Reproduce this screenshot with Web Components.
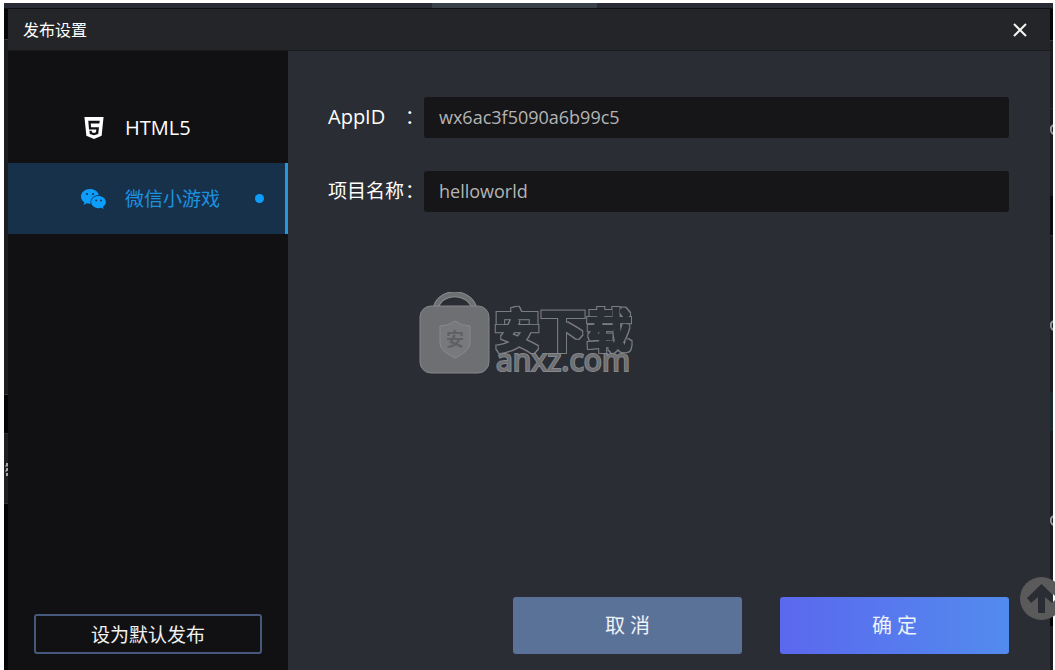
<!DOCTYPE html>
<html lang="zh-CN">
<head>
<meta charset="utf-8">
<title>发布设置</title>
<style>
  html, body { margin: 0; background: #fff; }
  body { font-family: "Open Sans", "Noto Sans CJK SC", sans-serif; color: #fff; }
</style>
</head>
<body>
<app-backdrop>
  <publish-dialog heading="发布设置">
    <platform-item slot="nav" label="HTML5">
      <svg viewBox="0 0 20 23" width="20" height="22"><path fill="#fff" fill-rule="evenodd" d="M0 0h20l-2 19.5L10 23l-8-3.500zM4 4l.8 9h7.600l-.3 3-2.100.7-2.200-.7-.2-1.500H5.200l.4 3.400L10 19.200l4.400-1.300.8-7.300H6.900l-.3-3.800h9L16 4z"/></svg>
    </platform-item>
    <platform-item slot="nav" label="微信小游戏" active>
      <svg viewBox="0 0 25 20" width="25" height="20">
        <path fill="#0d9dfb" d="M9 0C4 0 0 3.300 0 7.500c0 2.400 1.300 4.500 3.400 5.800L2.500 16l3.300-1.700c1 .3 2.100.4 3.200.4h.7c-.9-4.500 3-8.700 8.200-8.700C17 2.600 13.400 0 9 0z"/>
        <path fill="#0d9dfb" d="M17.500 7c-4.100 0-7.300 2.700-7.300 6.100s3.200 6.100 7.300 6.100c.9 0 1.700-.1 2.500-.4l2.600 1.200-.7-2.200c1.900-1.100 3-2.800 3-4.700C24.900 9.700 21.600 7 17.500 7z"/>
        <g fill="#17314a"><circle cx="6" cy="5" r="1"/><circle cx="12" cy="5" r="1"/><circle cx="15.200" cy="11.400" r=".9"/><circle cx="20" cy="11.400" r=".9"/></g>
      </svg>
    </platform-item>
    <outline-button slot="nav-footer">设为默认发布</outline-button>
    <form-field label="AppID" value="wx6ac3f5090a6b99c5" lang="en"></form-field>
    <form-field label="项目名称" value="helloworld"></form-field>
    <action-button slot="actions">取 消</action-button>
    <action-button slot="actions" primary>确 定</action-button>
  </publish-dialog>
  <site-watermark slot="overlay"></site-watermark>
  <back-to-top slot="overlay"></back-to-top>
</app-backdrop>

<script>
const define = (name, html, setup) => {
  const template = document.createElement('template');
  template.innerHTML = html;
  customElements.define(name, class extends HTMLElement {
    constructor() {
      super();
      this.attachShadow({ mode: 'open' }).append(template.content.cloneNode(true));
    }
    connectedCallback() { if (setup) setup(this, this.shadowRoot); }
  });
};

define('app-backdrop', `
  <style>
    :host { display: flex; box-sizing: border-box; position: relative; overflow: hidden;
      min-height: 100vh; padding: 3px 2px 0 4px; }
    .workspace { flex: 1; display: grid; grid-template: 6px 1fr / 4px 1fr 3px; background: #1b1d20; }
    .top { grid-column: 1 / -1; display: flex; justify-content: center; background: #282b33; border-bottom: 1px solid #101113; }
    .tab { width: 165px; background: #3a4048; margin-right: 28px; }
    .left { background: linear-gradient(#050708 0 30px, #34373a 30px 31px, #1b1d20 31px 385px, #34373a 385px 386px, #030405 386px 424px, #303236 424px 425px, #1d1f22 425px 494px, #303236 494px 495px, #030405 495px); }
    .right { background: linear-gradient(#050708 0 31px, #34373a 31px 32px, #1b1d20 32px 99px, #2c2f33 99px 100px, #1b1d20 100px 187px, #0a0c0e 187px 226px, #2c2f33 226px 227px, #1b1d20 227px 383px, #1b2b2f 383px 422px, #1b1d20 422px 585px, #030405 585px 617px, #1b1d20 617px); }
    .left svg, .right svg { display: block; }
  </style>
  <div class="workspace">
    <div class="top"><div class="tab"></div></div>
    <div class="left"><svg width="4" height="480" fill="none" stroke="#a8a8a8"><path stroke-width="2" stroke-dasharray="3 2" d="M3 454v15"/><path d="M1 457h3M1 462h2"/></svg></div>
    <slot></slot>
    <div class="right"><svg width="3" height="580" fill="none" stroke="#96999c" stroke-width="2"><path d="M4 116q-4 1-3 6 1 3 3 3M4 312q-4 1-3 6 1 3 3 3M4 507q-4 1-3 6 1 3 3 3"/></svg></div>
  </div>
  <slot name="overlay"></slot>`);

define('publish-dialog', `
  <style>
    :host { display: flex; flex-direction: column; background: #2b2d34; min-width: 0; }
    header { display: flex; align-items: center; justify-content: space-between; box-sizing: border-box;
      height: 42px; padding: 0 22px 2px 15px; background: #242528; border-bottom: 1px solid #1a1b1d; }
    h1 { margin: 0; font-size: 16px; line-height: 24px; font-weight: 400; font-family: "Noto Sans CJK SC", sans-serif; }
    .close { display: flex; padding: 2px 0 0; border: 0; background: none; cursor: pointer; }
    .body { flex: 1; display: grid; grid-template-columns: 280px 1fr; }
    nav, main { display: flex; flex-direction: column; justify-content: space-between; }
    nav { background: #111113; padding: 41px 0 16px; }
    .footer { padding: 0 26px; }
    main { padding: 46px 41px 16px 40px; }
    form { display: flex; flex-direction: column; gap: 33px; }
    .actions { display: flex; justify-content: flex-end; gap: 38px; }
  </style>
  <header><h1></h1>
    <button class="close" aria-label="关闭"><svg width="16" height="16" viewBox="0 0 16 16"><path d="M2 2l12 12M14 2L2 14" stroke="#f4f4f4" stroke-width="2"/></svg></button>
  </header>
  <div class="body">
    <nav><div><slot name="nav"></slot></div><div class="footer"><slot name="nav-footer"></slot></div></nav>
    <main><form><slot></slot></form><div class="actions"><slot name="actions"></slot></div></main>
  </div>`,
  (host, root) => { root.querySelector('h1').textContent = host.getAttribute('heading'); });

define('platform-item', `
  <style>
    :host { display: block; }
    button { display: grid; grid-template-columns: 27px 1fr 10px; column-gap: 18px; align-items: center; box-sizing: border-box;
      width: 100%; height: 71px; padding: 0 20px 0 72px; border: 0; border-right: 3px solid transparent;
      background: none; color: #fff; text-align: left; font: 400 20px/28px "Open Sans", "Noto Sans CJK SC", sans-serif; cursor: pointer; }
    .icon { display: flex; justify-content: center; }
    .dot { width: 9px; height: 9px; border-radius: 50%; }
    :host([active]) button { background: #17314a; border-right-color: #2797dc; color: #1c91e0; font-size: 19px; }
    :host([active]) .dot { background: #0d9dfb; }
  </style>
  <button type="button"><span class="icon"><slot></slot></span><span class="label"></span><span class="dot"></span></button>`,
  (host, root) => { root.querySelector('.label').textContent = host.getAttribute('label'); });

define('outline-button', `
  <style>
    :host { display: block; }
    button { width: 100%; height: 40px; padding: 0; border: 2px solid #46597c; border-radius: 3px; background: #111113;
      color: #f2f2f2; font: 400 19px/28px "Noto Sans CJK SC", sans-serif; cursor: pointer; }
  </style>
  <button type="button"><slot></slot></button>`);

define('form-field', `
  <style>
    :host { display: grid; grid-template-columns: 96px 1fr; align-items: center; }
    label { display: grid; grid-template-columns: 77px 19px; padding-bottom: 2px; font-size: 19px; line-height: 28px; white-space: nowrap; }
    :host(:lang(en)) .name { font-size: 20px; }
    input { box-sizing: border-box; width: 100%; min-width: 0; height: 41px; padding: 0 15px 2px; border: 0; border-radius: 3px;
      background: #161618; color: #b4b4b4; font: 400 18px/28px "Open Sans", "Noto Sans CJK SC", sans-serif; outline: 0; }
  </style>
  <label for="field"><span class="name"></span><span lang="zh-CN">：</span></label><input id="field" type="text">`,
  (host, root) => {
    root.querySelector('.name').textContent = host.getAttribute('label');
    root.querySelector('input').value = host.getAttribute('value');
  });

define('action-button', `
  <style>
    :host { display: block; width: 229px; }
    button { width: 100%; height: 57px; padding: 0; border: 0; border-radius: 3px; background: #5b7298; color: #eef3f8;
      font: 400 20px/28px "Open Sans", "Noto Sans CJK SC", sans-serif; cursor: pointer; }
    :host([primary]) button { background: linear-gradient(90deg, #5b68ee, #528bee); }
  </style>
  <button type="button"><slot></slot></button>`);

define('site-watermark', `
  <style>
    :host { position: absolute; left: 419px; top: 292px; pointer-events: none; }
    svg { display: block; }
  </style>
  <svg width="220" height="96" viewBox="0 0 220 96">
    <filter id="contour" x="-5%" y="-5%" width="110%" height="110%">
      <feMorphology in="SourceAlpha" operator="dilate" radius="2" result="outer"/>
      <feMorphology in="SourceAlpha" operator="dilate" radius="1" result="inner"/>
      <feFlood flood-color="#7b7d81"/><feComposite in2="outer" operator="in" result="line"/>
      <feFlood flood-color="#2b2d34"/><feComposite in2="inner" operator="in" result="body"/>
      <feMerge><feMergeNode in="line"/><feMergeNode in="body"/></feMerge>
    </filter>
    <path d="M17 15C22-2 49-2 55 15" fill="none" stroke="#8b8d90" stroke-width="6"/>
    <path d="M17 15C22-2 49-2 55 15" fill="none" stroke="#6d6f73" stroke-width="4"/>
    <rect x="1" y="14" width="69" height="67" rx="11" fill="#6d6f73" stroke="#85878a"/>
    <path d="M36 29q7 5 15 5v17q0 8-15 15-15-7-15-15V34q8 0 15-5z" fill="#77797c" stroke="#888a8d"/>
    <text x="27" y="54" font-family="Noto Sans CJK SC, sans-serif" font-size="18" font-weight="700" fill="#5e6064">安</text>
    <text x="75" y="55" font-family="Noto Sans CJK SC, sans-serif" font-size="46" font-weight="700" filter="url(#contour)">安下载</text>
    <text x="77" y="79" font-family="Noto Sans, sans-serif" font-size="30" fill="#6d6f73" stroke="#85878a" stroke-width="2" paint-order="stroke">anxz.com</text>
  </svg>`);

define('back-to-top', `
  <style>
    :host { position: absolute; right: -8px; bottom: 50px; }
    a { display: block; }
    svg { display: block; }
  </style>
  <a href="#" aria-label="返回顶部"><svg width="43" height="43" viewBox="0 0 43 43"><circle cx="21.500" cy="21.500" r="21.500" fill="#5a5a5b"/><path d="M21.500 7L36 21l-4 5-7-6v16h-7V20l-7 6-4-5z" fill="#2b2d34"/><path d="M33 17l4 4-4 4z" fill="#fff"/></svg></a>`);
</script>
</body>
</html>
